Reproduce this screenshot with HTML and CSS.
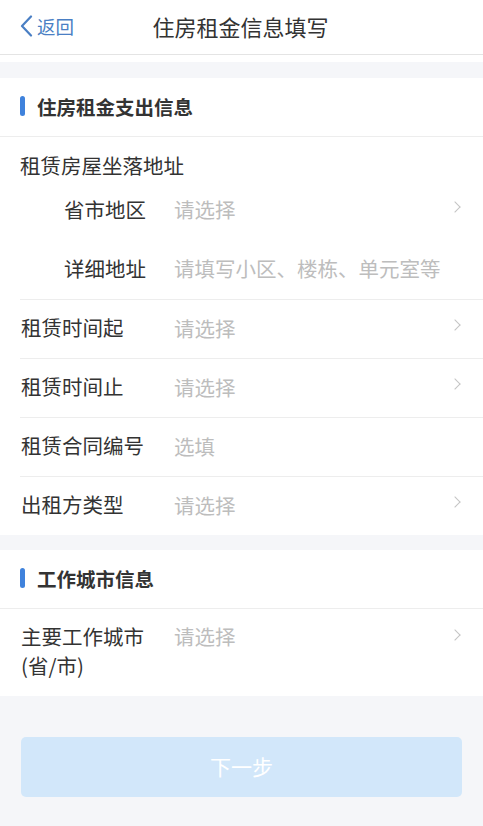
FILE: index.html
```html
<!DOCTYPE html>
<html lang="zh-CN">
<head>
<meta charset="utf-8">
<title>住房租金信息填写</title>
<link rel="stylesheet" href="styles.css">
</head>
<body>
<div class="page">
  <header class="nav">
    <div class="back">
      <svg class="back-icon" width="13" height="22" viewBox="0 0 13 22"><path d="M11 1.5 L2 11 L11 20.5" fill="none" stroke="#4a7fc4" stroke-width="2.2" stroke-linecap="round" stroke-linejoin="round"/></svg>
      <span>返回</span>
    </div>
    <h1 class="title">住房租金信息填写</h1>
    <div></div>
  </header>
  <div class="nav-spacer"></div>

  <section class="card card-first">
    <div class="card-head"><span class="bar"></span><span class="head-text">住房租金支出信息</span></div>
    <div class="group">
      <div class="group-title">租赁房屋坐落地址</div>
      <div class="row sub">
        <div class="label sublabel">省市地区</div>
        <div class="value">请选择</div>
        <span class="chev"></span>
      </div>
      <div class="row sub">
        <div class="label sublabel">详细地址</div>
        <div class="value">请填写小区、楼栋、单元室等</div>
      </div>
    </div>
    <div class="row line">
      <div class="label">租赁时间起</div>
      <div class="value">请选择</div>
      <span class="chev"></span>
    </div>
    <div class="row line">
      <div class="label">租赁时间止</div>
      <div class="value">请选择</div>
      <span class="chev"></span>
    </div>
    <div class="row line">
      <div class="label">租赁合同编号</div>
      <div class="value">选填</div>
    </div>
    <div class="row">
      <div class="label">出租方类型</div>
      <div class="value">请选择</div>
      <span class="chev"></span>
    </div>
  </section>

  <section class="card card-second">
    <div class="card-head"><span class="bar"></span><span class="head-text">工作城市信息</span></div>
    <div class="row tall">
      <div class="label">主要工作城市<br>(省/市)</div>
      <div class="value">请选择</div>
      <span class="chev"></span>
    </div>
  </section>

  <div class="footer">
    <button class="next" type="button">下一步</button>
  </div>
</div>
</body>
</html>
```

FILE: styles.css
```css
html, body {
  margin: 0;
  padding: 0;
}
body {
  background: #f5f6f9;
  font-family: "Noto Sans CJK SC", "Noto Sans", sans-serif;
  color: #333;
}
.page {
  width: 483px;
  min-height: 826px;
  background: #f5f6f9;
}
.nav {
  height: 55px;
  box-sizing: border-box;
  padding-bottom: 2px;
  background: #fff;
  border-bottom: 1px solid #e4e4e4;
  display: grid;
  grid-template-columns: 1fr auto 1fr;
  align-items: center;
}
.nav-spacer {
  height: 7px;
  background: #fff;
}
.back {
  display: flex;
  align-items: center;
  padding-left: 20px;
  color: #4a7fc4;
  font-size: 18.5px;
  gap: 4px;
}
.back-icon {
  display: block;
}
.title {
  margin: 0;
  font-size: 22px;
  font-weight: 400;
  color: #333;
  padding-right: 2px;
}
.card {
  background: #fff;
}
.card-first {
  margin-top: 16px;
}
.card-second {
  margin-top: 15px;
}
.card-head {
  height: 59px;
  box-sizing: border-box;
  padding-bottom: 2px;
  border-bottom: 1px solid #ededed;
  display: flex;
  align-items: center;
  padding-left: 20px;
  gap: 12px;
}
.bar {
  width: 5px;
  height: 20px;
  border-radius: 3px;
  background: #3f82dc;
}
.head-text {
  font-size: 19.5px;
  font-weight: 700;
  color: #333;
}
.group {
  margin-left: 20px;
  border-bottom: 1px solid #ededed;
}
.group-title {
  padding-top: 14px;
  padding-bottom: 1px;
  line-height: 29px;
  font-size: 20.5px;
  height: 29px;
}
.row {
  display: flex;
  align-items: center;
  height: 58px;
  box-sizing: border-box;
  padding-bottom: 3px;
  margin-left: 21px;
  padding-right: 22px;
  font-size: 20.5px;
}
.group .row {
  margin-left: 0;
  height: 59px;
}
.row.line {
  height: 59px;
  border-bottom: 1px solid #ededed;
  margin-left: 20px;
  padding-left: 1px;
}
.label {
  width: 153px;
  flex: none;
  color: #333;
  line-height: 29px;
}
.sublabel {
  padding-left: 44px;
  width: 110px;
}
.value {
  flex: 1;
  color: #bdbdbd;
  white-space: nowrap;
}
.chev {
  width: 7px;
  height: 7px;
  border-top: 1.6px solid #c4c4c4;
  border-right: 1.6px solid #c4c4c4;
  transform: rotate(45deg);
  margin-top: -5px;
  margin-right: 2px;
}
.row.tall {
  height: 87px;
  align-items: flex-start;
  padding-top: 13px;
  padding-bottom: 0;
}
.row.tall .value {
  line-height: 29px;
}
.row.tall .chev {
  margin-top: 9px;
}
.footer {
  padding: 41px 21px 0 21px;
}
.next {
  display: block;
  width: 441px;
  height: 60px;
  border: 0;
  border-radius: 5px;
  background: #d2e7fa;
  color: #fff;
  font-family: "Noto Sans CJK SC", "Noto Sans", sans-serif;
  font-size: 21px;
  padding: 0 0 3px 0;
}
```
